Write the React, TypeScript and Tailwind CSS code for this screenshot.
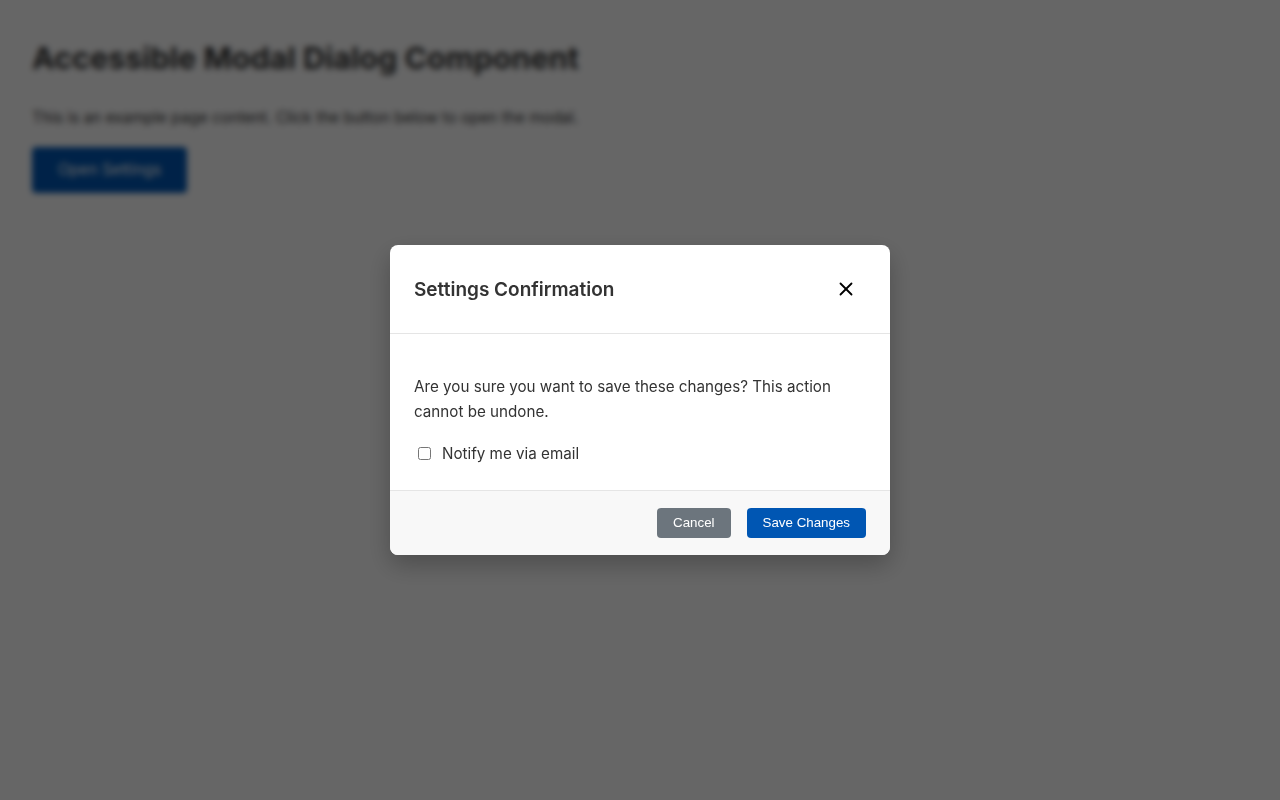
import { X } from 'lucide-react';

export default function App() {
  return (
    <div className="relative min-h-screen bg-white font-['Inter',sans-serif] text-[#333]">
      <div className="p-8">
        <h1 className="text-[30.5px] font-bold leading-tight mt-[7px]">Accessible Modal Dialog Component</h1>
        <p className="mt-[29px] text-[15.4px] leading-normal">
          This is an example page content. Click the button below to open the modal.
        </p>
        <button className="mt-[18px] px-[26px] py-3 bg-[#0056b3] text-white rounded text-[15.5px] leading-[22px]">
          Open Settings
        </button>
      </div>

      <div className="fixed inset-0 bg-black/[0.6] backdrop-blur-[3px] flex items-center justify-center">
        <div
          role="dialog"
          aria-modal="true"
          className="w-[500px] bg-white rounded-lg shadow-[0_10px_25px_rgba(0,0,0,0.25)] overflow-hidden"
        >
          <div className="flex items-center justify-between p-6 border-b border-[#e5e5e5]">
            <h2 className="mt-1 text-[19px] font-semibold text-[#333]">Settings Confirmation</h2>
            <button aria-label="Close" className="w-10 h-10 flex items-center justify-center text-black">
              <X size={22} strokeWidth={2} />
            </button>
          </div>
          <div className="p-6">
            <p className="my-4 text-[15.2px] leading-[25.6px] text-[#333]">
              Are you sure you want to save these changes? This action cannot be undone.
            </p>
            <label className="flex items-center text-[15.2px] leading-[25.6px] text-[#333]">
              <input type="checkbox" className="w-[13px] h-[13px] ml-1 mr-[11px]" />
              Notify me via email
            </label>
          </div>
          <div className="flex justify-end gap-4 px-6 py-[17px] bg-[#f8f8f8] border-t border-[#e5e5e5] font-['Liberation_Sans',Arial,sans-serif] text-[13.33px]">
            <button className="px-4 py-[7px] leading-4 bg-[#6c757d] text-white rounded">Cancel</button>
            <button className="px-4 py-[7px] leading-4 bg-[#0056b3] text-white rounded">Save Changes</button>
          </div>
        </div>
      </div>
    </div>
  );
}
